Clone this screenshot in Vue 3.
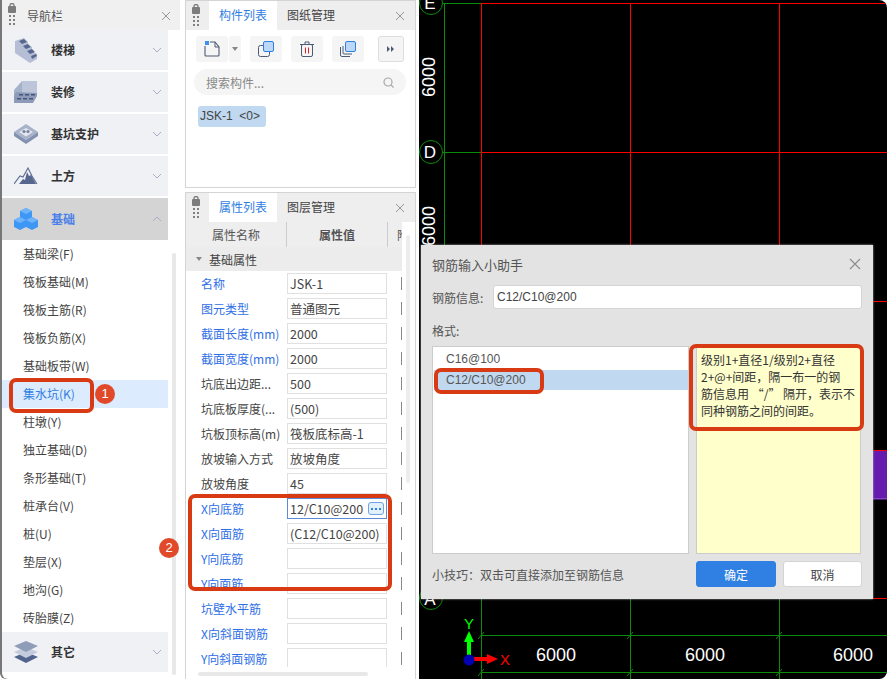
<script setup>
const topNav = [
  { name: '楼梯', icon: 'stairs' },
  { name: '装修', icon: 'floor' },
  { name: '基坑支护', icon: 'pit' },
  { name: '土方', icon: 'hill' }
]

const subItems = ['基础梁(F)', '筏板基础(M)', '筏板主筋(R)', '筏板负筋(X)', '基础板带(W)', '集水坑(K)', '柱墩(Y)',
  '独立基础(D)', '条形基础(T)', '桩承台(V)', '桩(U)', '垫层(X)', '地沟(G)', '砖胎膜(Z)']

const props = [
  { label: '名称', value: 'JSK-1', blue: true },
  { label: '图元类型', value: '普通图元', blue: true },
  { label: '截面长度(mm)', value: '2000', blue: true },
  { label: '截面宽度(mm)', value: '2000', blue: true },
  { label: '坑底出边距...', value: '500' },
  { label: '坑底板厚度(...', value: '(500)' },
  { label: '坑板顶标高(m)', value: '筏板底标高-1' },
  { label: '放坡输入方式', value: '放坡角度' },
  { label: '放坡角度', value: '45' },
  { label: 'X向底筋', value: '12/C10@200', blue: true, editing: true },
  { label: 'X向面筋', value: '(C12/C10@200)', blue: true },
  { label: 'Y向底筋', value: '', blue: true },
  { label: 'Y向面筋', value: '', blue: true },
  { label: '坑壁水平筋', value: '', blue: true },
  { label: 'X向斜面钢筋', value: '', blue: true },
  { label: 'Y向斜面钢筋', value: '', blue: true }
]

const noteLines = ['级别1+直径1/级别2+直径', '2+@+间距，隔一布一的钢', '筋信息用 “/” 隔开，表示不', '同种钢筋之间的间距。']

const tagText = 'JSK-1  <0>'

const gridX = [481, 630, 779].map(x => x - 419)
const gridY = [3, 152, 301, 450, 598]
</script>

<template>
  <div class="app">
    <aside class="nav">
      <div class="nav-head">
        <span class="grip">
          <svg width="8" height="24" viewBox="0 0 8 24">
            <rect x="0" y="3" width="8" height="7" rx="1" fill="#7c7c7c" />
            <path d="M2 3.500V2.500a2 2 0 0 1 4 0v1" fill="none" stroke="#7c7c7c" stroke-width="1.300" />
            <g fill="#808080">
              <rect x="1" y="12" width="2" height="2" /><rect x="5" y="12" width="2" height="2" />
              <rect x="1" y="16" width="2" height="2" /><rect x="5" y="16" width="2" height="2" />
              <rect x="1" y="20" width="2" height="2" /><rect x="5" y="20" width="2" height="2" />
            </g>
          </svg>
        </span>
        <span class="nav-title">导航栏</span>
        <svg class="close" width="10" height="10" viewBox="0 0 10 10"><path d="M1 1l8 8M9 1l-8 8" stroke="#999" fill="none" /></svg>
      </div>
      <div class="nav-body">
        <div class="nav-main">
          <div v-for="n in topNav" :key="n.name" class="nav-item">
            <span class="nav-icon">
              <svg v-if="n.icon === 'stairs'" width="24" height="25" viewBox="0 0 24 25">
                <path d="M1 3l9-3 4 4v3l4 2v4l5 3v5l-7 4L1 15z" fill="#b5bed4" />
                <path d="M5 3l5-2 3 3-5 2zM9 8l5-2 3 3-5 2zM13 13l5-2 3 3-5 2zM17 18l5-2 1 2-5 3z" fill="#56678f" />
              </svg>
              <svg v-if="n.icon === 'floor'" width="24" height="22" viewBox="0 0 24 22">
                <path d="M8 0h15v15H8z" fill="#bcc5d9" />
                <path d="M8 0L0 9v6l8-3z" fill="#a5b0c9" />
                <path d="M2 11l21 1v3l-4 7H0v-7z" fill="#8d9ab8" />
                <path d="M5 13h4v1.500H5zM11 13h4v1.500h-4zM17 13h4v1.500h-4zM3 17h4v1.500H3zM9 17h4v1.500H9zM15 17h4v1.500h-4z" fill="#44557d" />
              </svg>
              <svg v-if="n.icon === 'pit'" width="24" height="20" viewBox="0 0 24 20">
                <path d="M12 0l12 8-12 8L0 8z" fill="#a8b3cb" />
                <path d="M0 8v4l12 8 12-8V8l-12 8z" fill="#8391b1" />
                <path d="M12 4l7 4-7 4.500L5 8z" fill="#e4e7ef" />
                <circle cx="10" cy="7.500" r="1.600" fill="#75839f" /><circle cx="14" cy="7.500" r="1.600" fill="#75839f" />
              </svg>
              <svg v-if="n.icon === 'hill'" width="24" height="18" viewBox="0 0 24 18">
                <path d="M0 17l6-8 3 1 5-9 4 8 5 8" fill="none" stroke="#5b6b91" stroke-width="1.100" />
                <path d="M5 17l4-5 2 1 2-8 2 4 2-1 5 9z" fill="#56678f" />
              </svg>
            </span>
            <span class="nav-name">{{ n.name }}</span>
            <svg class="chev" width="10" height="6" viewBox="0 0 10 6"><path d="M1 1l4 4 4-4" fill="none" stroke="#a6aec4" /></svg>
          </div>
          <div class="nav-item active">
            <span class="nav-icon">
              <svg width="24" height="23" viewBox="0 0 24 23">
                <g v-for="c in [[12, 0], [6, 9], [18, 9]]" :key="c[0] + c[1]">
                  <path :d="`M${c[0]} ${c[1]}l6 3v7l-6 3-6-3v-7z`" fill="#3f97f5" />
                  <path :d="`M${c[0] - 6} ${c[1] + 3}l6 3 6-3-6-3z`" fill="#6fb4fb" />
                </g>
              </svg>
            </span>
            <span class="nav-name">基础</span>
            <svg class="chev" width="10" height="6" viewBox="0 0 10 6"><path d="M1 5l4-4 4 4" fill="none" stroke="#a6aec4" /></svg>
          </div>
          <div class="sub-list">
            <div v-for="s in subItems" :key="s" class="sub-item" :class="{ on: s === '集水坑(K)' }">{{ s }}</div>
          </div>
          <div class="nav-item">
            <span class="nav-icon">
              <svg width="24" height="22" viewBox="0 0 24 22">
                <path d="M12 11l12 5-12 6-12-6z" fill="#52648e" />
                <path d="M12 6l12 5-12 6-12-6z" fill="#c3cbdd" />
                <path d="M12 0l12 5-12 6L0 5z" fill="#909db9" />
              </svg>
            </span>
            <span class="nav-name">其它</span>
            <svg class="chev" width="10" height="6" viewBox="0 0 10 6"><path d="M1 1l4 4 4-4" fill="none" stroke="#a6aec4" /></svg>
          </div>
        </div>
        <div class="nav-scroll"><div class="nav-thumb"></div></div>
      </div>
    </aside>

    <div class="middle">
      <section class="panel list-panel">
        <div class="tabs">
          <span class="grip small">
            <svg width="8" height="24" viewBox="0 0 8 24">
              <rect x="0" y="3" width="8" height="7" rx="1" fill="#7c7c7c" />
              <path d="M2 3.500V2.500a2 2 0 0 1 4 0v1" fill="none" stroke="#7c7c7c" stroke-width="1.300" />
              <g fill="#808080">
                <rect x="1" y="12" width="2" height="2" /><rect x="5" y="12" width="2" height="2" />
                <rect x="1" y="16" width="2" height="2" /><rect x="5" y="16" width="2" height="2" />
                <rect x="1" y="20" width="2" height="2" /><rect x="5" y="20" width="2" height="2" />
              </g>
            </svg>
          </span>
          <span class="tab active">构件列表</span>
          <span class="tab">图纸管理</span>
          <svg class="tab-close" width="10" height="10" viewBox="0 0 10 10"><path d="M1 1l8 8M9 1l-8 8" stroke="#999" fill="none" /></svg>
        </div>
        <div class="toolbar">
          <div class="tool new">
            <svg width="16" height="16" viewBox="0 0 16 16">
              <path d="M1 5v9a1 1 0 0 0 1 1h12a1 1 0 0 0 1-1V6l-4-5H6" fill="none" stroke="#4d5a73" stroke-width="1.100" />
              <path d="M11 1v5h4" fill="none" stroke="#4d5a73" />
              <rect x="1" y="0" width="4" height="4" fill="#3f8fee" />
            </svg>
          </div>
          <div class="tool drop"><i></i></div>
          <div class="tool">
            <svg width="16" height="16" viewBox="0 0 16 16">
              <rect x="0.500" y="4.500" width="11" height="11" rx="2" fill="none" stroke="#4d5a73" />
              <rect x="5.500" y="0.500" width="10" height="10" rx="1.500" fill="#bcd7f7" stroke="#2f80e2" />
            </svg>
          </div>
          <div class="tool">
            <svg width="14" height="16" viewBox="0 0 14 16">
              <path d="M0 3.500h14M5 3V1h4v2" fill="none" stroke="#4d5a73" />
              <rect x="1.500" y="3.500" width="11" height="12" rx="1.500" fill="none" stroke="#4d5a73" />
              <path d="M5.500 6.500v6M8.500 6.500v6" stroke="#e02020" />
            </svg>
          </div>
          <div class="tool">
            <svg width="16" height="16" viewBox="0 0 16 16">
              <path d="M0.500 6v8a1.500 1.500 0 0 0 1.500 1.500h8" fill="none" stroke="#4d5a73" />
              <path d="M3 5v7a1 1 0 0 0 1 1h8" fill="none" stroke="#4d5a73" />
              <rect x="5.500" y="0.500" width="10" height="10" rx="1.500" fill="#bcd7f7" stroke="#2f80e2" />
            </svg>
          </div>
          <div class="tool more">
            <svg width="8" height="6" viewBox="0 0 8 6"><path d="M0 0l3 3-3 3zM4 0l3 3-3 3z" fill="#4d5a73" /></svg>
          </div>
        </div>
        <div class="search">
          <span>搜索构件...</span>
          <svg width="11" height="11" viewBox="0 0 11 11"><circle cx="5" cy="5" r="4" fill="none" stroke="#aaa" stroke-width="1.200" /><path d="M8 8l2.500 2.500" stroke="#aaa" stroke-width="1.200" /></svg>
        </div>
        <div class="tag">{{ tagText }}</div>
      </section>

      <section class="panel prop-panel">
        <div class="tabs">
          <span class="grip small">
            <svg width="8" height="24" viewBox="0 0 8 24">
              <rect x="0" y="3" width="8" height="7" rx="1" fill="#7c7c7c" />
              <path d="M2 3.500V2.500a2 2 0 0 1 4 0v1" fill="none" stroke="#7c7c7c" stroke-width="1.300" />
              <g fill="#808080">
                <rect x="1" y="12" width="2" height="2" /><rect x="5" y="12" width="2" height="2" />
                <rect x="1" y="16" width="2" height="2" /><rect x="5" y="16" width="2" height="2" />
                <rect x="1" y="20" width="2" height="2" /><rect x="5" y="20" width="2" height="2" />
              </g>
            </svg>
          </span>
          <span class="tab active">属性列表</span>
          <span class="tab">图层管理</span>
          <svg class="tab-close" width="10" height="10" viewBox="0 0 10 10"><path d="M1 1l8 8M9 1l-8 8" stroke="#999" fill="none" /></svg>
        </div>
        <div class="prop-body">
          <div class="prop-table">
            <div class="prop-head">
              <span class="h1">属性名称</span>
              <span class="h2">属性值</span>
              <span class="h3">附</span>
            </div>
            <div class="prop-group"><i></i>基础属性</div>
            <div v-for="p in props" :key="p.label" class="prop-row">
              <span class="prop-label" :class="{ blue: p.blue }">{{ p.label }}</span>
              <span class="prop-value" :class="{ editing: p.editing }">
                <em>{{ p.value }}</em>
                <b v-if="p.editing" class="dots">
                  <svg width="10" height="2" viewBox="0 0 10 2"><path d="M0 0h2v2H0zM4 0h2v2H4zM8 0h2v2H8z" fill="#2f80e2" /></svg>
                </b>
              </span>
              <span class="prop-extra"></span>
            </div>
          </div>
          <div class="prop-scroll"><div class="prop-thumb"></div></div>
        </div>
        <div class="prop-hscroll"></div>
      </section>
    </div>

    <main class="canvas">
      <svg class="drawing" width="468" height="679" viewBox="0 0 468 679">
        <line x1="25.500" y1="3" x2="25.500" y2="245" stroke="#0b8a0b" />
        <line x1="12" y1="3.500" x2="62" y2="3.500" stroke="#0b8a0b" />
        <line x1="12" y1="152.500" x2="62" y2="152.500" stroke="#0b8a0b" />
        <line v-for="x in gridX" :key="x" :x1="x + 0.5" y1="3" :x2="x + 0.5" y2="598" stroke="#ff0000" />
        <line v-for="y in gridY" :key="y" x1="62" :y1="y + 0.5" x2="468" :y2="y + 0.5" stroke="#ff0000" />
        <line v-for="x in gridX" :key="'g' + x" :x1="x + 0.5" y1="599" :x2="x + 0.5" y2="679" stroke="#0b8a0b" />
        <line x1="62" y1="635.500" x2="468" y2="635.500" stroke="#0b8a0b" />
        <line x1="62" y1="672.500" x2="468" y2="672.500" stroke="#0b8a0b" />
        <g v-for="x in gridX" :key="'t' + x" stroke="#0b8a0b">
          <line :x1="x - 3" y1="639" :x2="x + 3" y2="632" />
          <line :x1="x - 3" y1="676" :x2="x + 3" y2="669" />
        </g>
        <circle cx="12" cy="3" r="11.500" fill="#000" stroke="#0b8a0b" />
        <circle cx="12" cy="152" r="11.500" fill="#000" stroke="#0b8a0b" />
        <circle cx="12" cy="598" r="11.500" fill="#000" stroke="#0b8a0b" />
        <text x="11" y="9" class="axis-letter">E</text>
        <text x="11" y="158" class="axis-letter">D</text>
        <text x="11" y="605" class="axis-letter">A</text>
        <text class="dim" transform="translate(16 97) rotate(-90)">6000</text>
        <text class="dim" transform="translate(16 246) rotate(-90)">6000</text>
        <text class="dim" x="117" y="661">6000</text>
        <text class="dim" x="266" y="661">6000</text>
        <text class="dim" x="414" y="661">6000</text>
        <rect x="48" y="640" width="4" height="16" fill="#00ff00" />
        <path d="M50 631l-5 11h10z" fill="#00ff00" />
        <rect x="54" y="657" width="16" height="4" fill="#ff0000" />
        <path d="M79 659l-11-5v10z" fill="#ff0000" />
        <circle cx="50" cy="660" r="5.500" fill="#0000b0" />
        <text x="50" y="629" class="axis-y">Y</text>
        <text x="86" y="665" class="axis-x">X</text>
        <rect x="454" y="451" width="14" height="47" fill="#651bae" />
        <rect x="454" y="498" width="14" height="1.500" fill="#8a3fd0" />
      </svg>

      <div class="dialog">
        <div class="dlg-title">
          <span>钢筋输入小助手</span>
          <svg width="12" height="12" viewBox="0 0 12 12"><path d="M1 1l10 10M11 1L1 11" stroke="#8a8a8a" fill="none" stroke-width="1.100" /></svg>
        </div>
        <div class="dlg-info">
          <label>钢筋信息:</label>
          <div class="dlg-input">C12/C10@200</div>
        </div>
        <div class="dlg-format">格式:</div>
        <div class="dlg-panes">
          <div class="dlg-list">
            <div class="dlg-li">C16@100</div>
            <div class="dlg-li sel">C12/C10@200</div>
          </div>
          <div class="dlg-note">
            <div v-for="line in noteLines" :key="line">{{ line }}</div>
          </div>
        </div>
        <div class="dlg-foot">
          <span class="tip">小技巧：双击可直接添加至钢筋信息</span>
          <div class="btns">
            <button class="btn primary">确定</button>
            <button class="btn">取消</button>
          </div>
        </div>
      </div>
    </main>

    <!-- 标注框 -->
    <div class="mark m1"></div>
    <div class="mark m2"></div>
    <div class="mark m3"></div>
    <div class="mark m4"></div>
    <div class="badge b1">1</div>
    <div class="badge b2">2</div>
  </div>
</template>

<style>
html, body {
  margin: 0;
  background: #fff;
}
</style>

<style scoped>
.app {
  position: relative;
  display: flex;
  width: 887px;
  height: 679px;
  overflow: hidden;
  background: #fff;
  font-family: "Noto Sans CJK SC", "Liberation Sans", sans-serif;
  font-size: 12px;
  color: #333;
}

.nav {
  width: 178px;
  height: 679px;
  margin-left: 2px;
  flex-shrink: 0;
  box-shadow: -2px 0 0 #777;
  border-bottom-left-radius: 6px;
}

.nav-head {
  display: flex;
  align-items: center;
  height: 30px;
  background: #f0f0f1;
  position: relative;
}

.grip {
  display: flex;
  margin-left: 6px;
  width: 19px;
}

.nav-title {
  color: #555;
}

.close {
  position: absolute;
  right: 9px;
  top: 11px;
}

.nav-body {
  display: flex;
}

.nav-main {
  width: 166px;
}

.nav-item {
  display: flex;
  align-items: center;
  height: 40px;
  margin-bottom: 2px;
  background: #f0f1f5;
}

.nav-item.active {
  background: #d4d4d4;
  height: 42px;
  margin-bottom: 0;
}

.nav-item.active .nav-name {
  color: #4b80e8;
}

.nav-icon {
  display: flex;
  justify-content: center;
  width: 47px;
  margin-right: 2px;
}

.nav-name {
  flex: 1;
  margin-top: -2px;
  font-weight: 700;
  color: #333;
}

.chev {
  margin-right: 6px;
}

.sub-item {
  height: 28px;
  line-height: 28px;
  padding-left: 21px;
  color: #444;
}

.sub-item.on {
  background: #dcebfd;
  color: #2f80e2;
}

.nav-scroll {
  width: 5px;
  margin-left: 4px;
  padding-top: 223px;
}

.nav-thumb {
  width: 4px;
  height: 422px;
  background: #e8e8e8;
  border-radius: 2px;
}

.middle {
  display: flex;
  flex-direction: column;
  width: 231px;
  margin-left: 5px;
  gap: 4px;
  flex-shrink: 0;
}

.panel {
  border: 1px solid #d4d4d4;
  box-sizing: border-box;
  background: #fff;
}

.list-panel {
  height: 188px;
}

.prop-panel {
  flex: 1;
  min-height: 0;
  position: relative;
  border-bottom: 0;
  overflow: hidden;
}

.tabs {
  display: flex;
  align-items: stretch;
  height: 29px;
  background: #eeeeef;
  position: relative;
}

.grip.small {
  margin-left: 6px;
  width: 17px;
  align-items: center;
}

.tab {
  width: 68px;
  line-height: 28px;
  text-align: center;
  font-size: 12px;
  color: #444;
}

.tab.active {
  background: #fff;
  color: #2f80e2;
}

.tab-close {
  position: absolute;
  right: 10px;
  top: 10px;
}

.toolbar {
  display: flex;
  align-items: center;
  height: 26px;
  margin: 6px 0 0 10px;
}

.tool {
  display: flex;
  align-items: center;
  justify-content: center;
  width: 32px;
  height: 26px;
  margin-right: 9px;
  background: #f5f5f5;
  border-radius: 3px;
}

.tool.new {
  margin-right: 1px;
}

.tool.drop {
  width: 12px;
}

.tool.drop i {
  border: 3px solid transparent;
  border-top: 4px solid #888;
  border-bottom: 0;
}

.tool.more {
  width: 26px;
  margin: 0 0 0 5px;
  border: 1px solid #ddd;
  box-sizing: border-box;
}

.search {
  display: flex;
  align-items: center;
  justify-content: space-between;
  height: 26px;
  margin: 7px 9px 0 8px;
  padding: 0 12px;
  background: #f5f5f5;
  border-radius: 13px;
  color: #888;
}

.tag {
  display: inline-block;
  margin: 11px 0 0 12px;
  width: 68px;
  height: 21px;
  line-height: 21px;
  padding-left: 2px;
  box-sizing: border-box;
  background: #c0d8f0;
  border-radius: 3px;
  white-space: pre;
  font-family: "Liberation Sans", sans-serif;
  color: #444;
}

.prop-body {
  display: flex;
}

.prop-table {
  width: 216px;
  height: 445px;
  overflow: hidden;
  flex-shrink: 0;
}

.prop-head {
  display: flex;
  height: 25px;
  line-height: 25px;
  background: #eeeeef;
  color: #555;
  text-align: center;
}

.h1 {
  width: 100px;
  border-right: 1px solid #ccc;
}

.h2 {
  width: 100px;
  border-right: 1px solid #ccc;
  font-weight: 700;
}

.h3 {
  flex: 1;
  padding-left: 9px;
  overflow: hidden;
  text-align: left;
}

.prop-group {
  display: flex;
  align-items: center;
  height: 24px;
  background: #ececec;
  color: #444;
}

.prop-group i {
  border: 3px solid transparent;
  border-top: 4px solid #888;
  border-bottom: 0;
  margin: 0 7px 0 10px;
}

.prop-row {
  display: flex;
  align-items: center;
  height: 25px;
}

.prop-label {
  width: 101px;
  padding-left: 15px;
  box-sizing: border-box;
  color: #444;
  white-space: nowrap;
  overflow: hidden;
}

.prop-label.blue {
  color: #2f6fe6;
}

.prop-value {
  display: flex;
  align-items: center;
  justify-content: space-between;
  width: 100px;
  height: 21px;
  padding: 0 2px;
  box-sizing: border-box;
  border: 1px solid #e0e0e0;
  white-space: nowrap;
  overflow: hidden;
  color: #444;
}

.prop-value em {
  font-style: normal;
  font-size: 12.5px;
}

.prop-value.editing {
  border-color: #5b8ad6;
}

.dots {
  display: flex;
  align-items: center;
  justify-content: center;
  flex-shrink: 0;
  width: 16px;
  height: 13px;
  box-sizing: border-box;
  border: 1px solid #6ea3e8;
  border-radius: 3px;
  background: #e4effc;
}

.prop-extra {
  width: 1px;
  height: 13px;
  margin-left: 14px;
  background: #888;
}

.prop-scroll {
  width: 4px;
  margin-left: 4px;
  padding-top: 13px;
}

.prop-thumb {
  width: 4px;
  height: 248px;
  background: #ededed;
  border-radius: 2px;
}

.prop-hscroll {
  position: absolute;
  left: 12px;
  bottom: 3px;
  width: 170px;
  height: 4px;
  background: #e8e8e8;
  border-radius: 2px;
}

.canvas {
  position: relative;
  margin-left: 3px;
  width: 468px;
  height: 679px;
  background: #000;
  border-top-right-radius: 8px;
  border-bottom-right-radius: 8px;
  overflow: hidden;
  flex-shrink: 0;
}

.drawing {
  position: absolute;
  left: 0;
  top: 0;
}

.dim {
  font-family: "Liberation Sans", sans-serif;
  font-size: 18px;
  fill: #fff;
}

.axis-letter {
  font-family: "Liberation Sans", sans-serif;
  font-size: 17px;
  fill: #fff;
  text-anchor: middle;
}

.axis-y,
.axis-x {
  font-family: "Liberation Sans", sans-serif;
  font-size: 15px;
  text-anchor: middle;
}

.axis-y {
  fill: #00ff00;
}

.axis-x {
  fill: #ff0000;
}

.dialog {
  position: absolute;
  left: 2px;
  top: 245px;
  width: 452px;
  height: 354px;
  box-sizing: border-box;
  padding: 0 11px;
  background: #e3e3e3;
  color: #555;
  box-shadow: 0 0 2px #aaa;
}

.dlg-title {
  display: flex;
  align-items: center;
  justify-content: space-between;
  height: 38px;
  padding-right: 1px;
  font-size: 13px;
}

.dlg-info {
  display: flex;
  align-items: center;
  height: 24px;
  margin-top: 2px;
}

.dlg-info label {
  width: 61px;
  flex-shrink: 0;
}

.dlg-input {
  flex: 1;
  height: 24px;
  line-height: 22px;
  box-sizing: border-box;
  padding-left: 3px;
  background: #fff;
  border: 1px solid #d4d4d4;
  border-radius: 3px;
  font-family: "Liberation Sans", sans-serif;
  color: #444;
}

.dlg-format {
  margin-top: 13px;
  line-height: 18px;
}

.dlg-panes {
  display: flex;
  gap: 7px;
  height: 208px;
  margin-top: 6px;
}

.dlg-list {
  width: 257px;
  box-sizing: border-box;
  background: #fff;
  border: 1px solid #ccc;
  padding: 2px 0 0 1px;
}

.dlg-li {
  height: 20px;
  line-height: 20px;
  padding-left: 12px;
  font-family: "Liberation Sans", sans-serif;
  color: #555;
}

.dlg-li.sel {
  background: #c0d8f0;
  margin-top: 1px;
}

.dlg-note {
  width: 165px;
  box-sizing: border-box;
  background: #ffffcc;
  border: 1px solid #ccc;
  padding: 4px 0 0 4px;
  line-height: 17px;
  color: #333;
  white-space: nowrap;
  overflow: hidden;
}

.dlg-foot {
  display: flex;
  align-items: center;
  justify-content: space-between;
  height: 26px;
  margin-top: 7px;
}

.btns {
  display: flex;
  gap: 7px;
}

.btn {
  width: 79px;
  height: 26px;
  padding: 0;
  background: #fff;
  border: 1px solid #d4d4d4;
  border-radius: 3px;
  font: inherit;
  color: #444;
}

.btn.primary {
  width: 80px;
  background: #2f80e2;
  border-color: #2f80e2;
  color: #fff;
}

.mark {
  position: absolute;
  box-sizing: border-box;
  border: 4px solid #d83b14;
  border-radius: 7px;
}

.m1 { left: 9px; top: 378px; width: 85px; height: 35px; }
.m2 { left: 188px; top: 494px; width: 204px; height: 97px; }
.m3 { left: 434px; top: 368px; width: 110px; height: 26px; }
.m4 { left: 689px; top: 344px; width: 175px; height: 87px; }

.badge {
  position: absolute;
  width: 20px;
  height: 20px;
  line-height: 20px;
  text-align: center;
  border-radius: 50%;
  background: #e04a2a;
  color: #fff;
  font-family: "Liberation Sans", sans-serif;
  font-size: 13px;
}

.b1 { left: 95px; top: 384px; }
.b2 { left: 159px; top: 538px; }
</style>
